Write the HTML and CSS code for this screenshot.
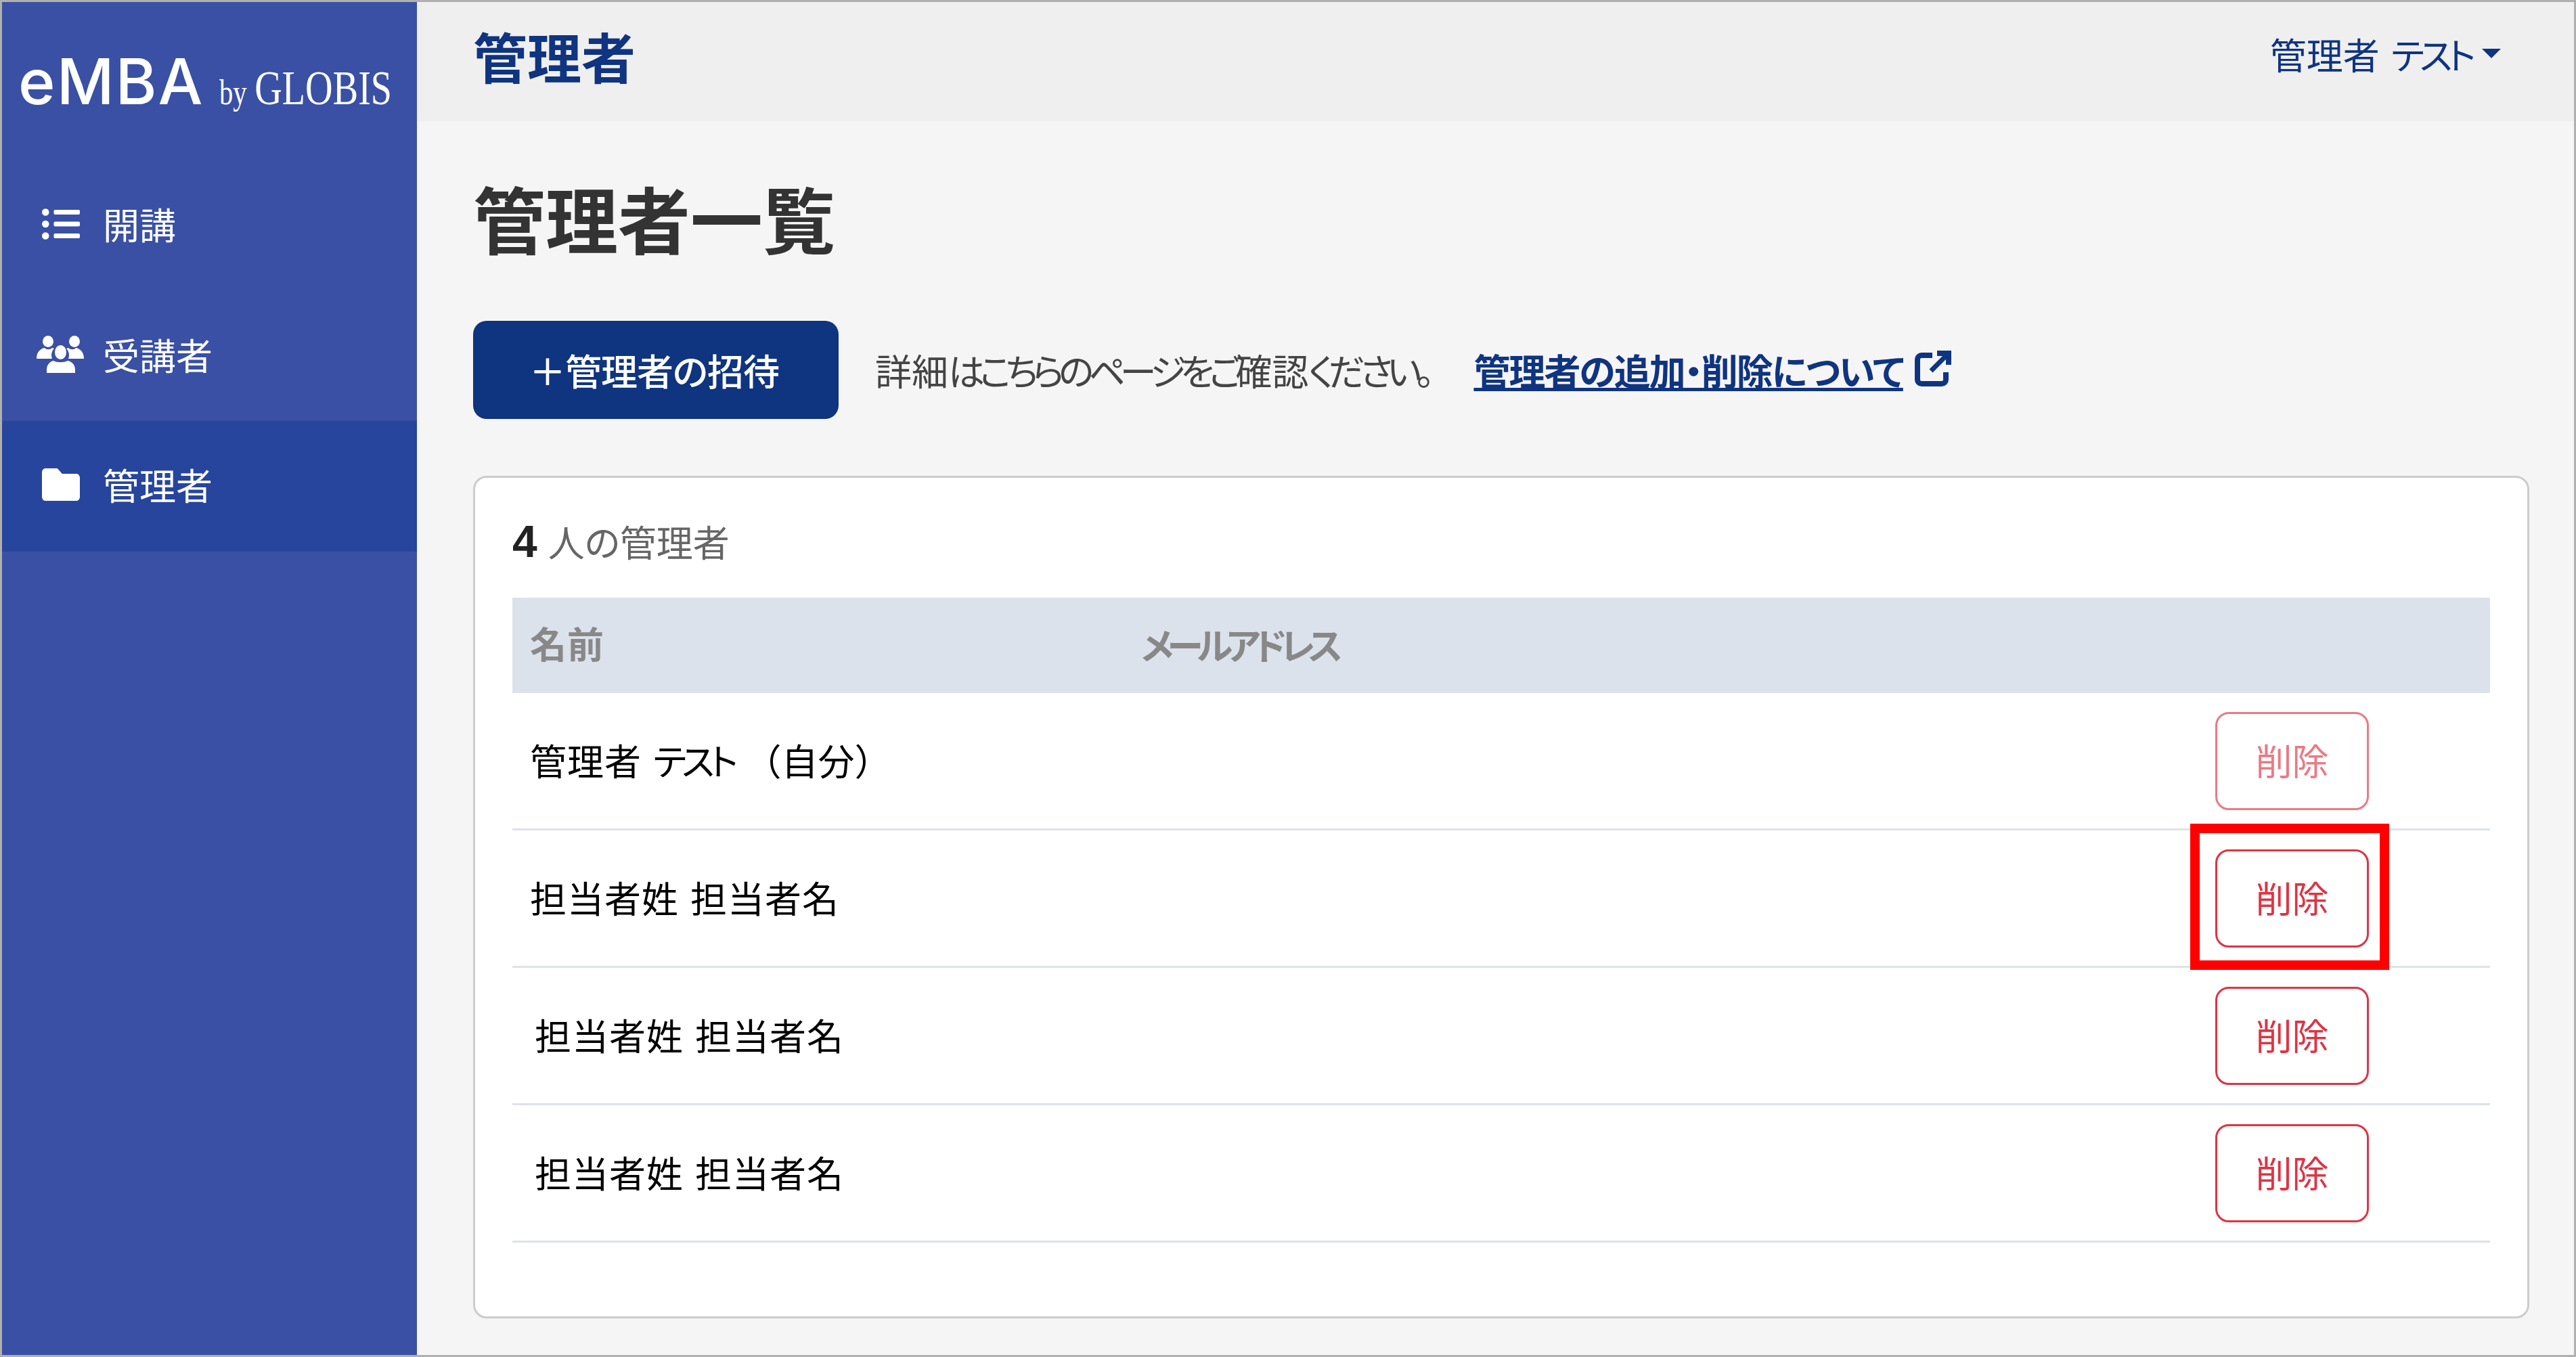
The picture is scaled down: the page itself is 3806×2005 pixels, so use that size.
FILE: index.html
```html
<!DOCTYPE html>
<html lang="ja">
<head>
  <meta charset="UTF-8" />
  <title>管理者一覧</title>
  <link rel="stylesheet" href="styles.css">
</head>
<body>
  <div class="frame">
    <!-- Sidebar -->
    <aside class="sidebar">
      <div class="logo">
        <span class="logo-main">eMBA</span>
        <span class="logo-sub"><span class="logo-by">by</span>GLOBIS</span>
      </div>
      <nav>
        <a class="nav-item">
          <span class="nav-icon">
            <svg class="icon-list" viewBox="0 0 512 416" fill="#fff"><path d="M48 0a48 48 0 1 0 48 48A48 48 0 0 0 48 0zm0 160a48 48 0 1 0 48 48 48 48 0 0 0-48-48zm0 160a48 48 0 1 0 48 48 48 48 0 0 0-48-48zm448 16H176a16 16 0 0 0-16 16v32a16 16 0 0 0 16 16h320a16 16 0 0 0 16-16v-32a16 16 0 0 0-16-16zm0-320H176a16 16 0 0 0-16 16v32a16 16 0 0 0 16 16h320a16 16 0 0 0 16-16V32a16 16 0 0 0-16-16zm0 160H176a16 16 0 0 0-16 16v32a16 16 0 0 0 16 16h320a16 16 0 0 0 16-16v-32a16 16 0 0 0-16-16z"/></svg>
          </span>
          開講
        </a>
        <a class="nav-item">
          <span class="nav-icon">
            <svg class="icon-users" viewBox="0 0 70 55" fill="#fff">
              <ellipse cx="17" cy="8.500" rx="8" ry="8.500"/>
              <ellipse cx="56" cy="8.500" rx="8" ry="8.500"/>
              <ellipse cx="35.500" cy="24.500" rx="8.500" ry="10.500"/>
              <path d="M0 34c0-9 5-15 12-16 2 3 8 3 11 0 1 0 2 1 3 1-4 4-5 10-3 15z"/>
              <path d="M70 34c0-9-5-15-12-16-2 3-8 3-11 0-1 0-2 1-3 1 4 4 5 10 3 15z"/>
              <path d="M15 55V50c0-7 5-12 10-13 5 3 16 3 21 0 6 1 11 6 11 13v5z"/>
            </svg>
          </span>
          受講者
        </a>
        <a class="nav-item active">
          <span class="nav-icon">
            <svg class="icon-folder" viewBox="0 64 512 384" preserveAspectRatio="none" fill="#fff"><path d="M464 128H272l-64-64H48C21.490 64 0 85.490 0 112v288c0 26.510 21.490 48 48 48h416c26.510 0 48-21.490 48-48V176c0-26.510-21.490-48-48-48z"/></svg>
          </span>
          管理者
        </a>
      </nav>
    </aside>

    <div class="content">
      <header class="topbar">
        <div class="topbar-title">管理者</div>
        <div class="user-menu"><span>管理者 <span class="kana">テスト</span></span><span class="caret"></span></div>
      </header>

      <main class="main">
        <h1>管理者一覧</h1>

        <div class="actions">
          <button class="btn-invite">＋管理者の招待</button>
          <span class="help-text">詳細<span class="tight">はこちらのページをご</span>確認<span class="tight">ください。</span></span>
          <a class="help-link">管理者の追加・削除について</a>
          <svg class="icon-external" viewBox="0 0 54 54" fill="none" stroke="#0f3480" stroke-width="8">
            <path d="M26 8H10a6 6 0 0 0-6 6v30a6 6 0 0 0 6 6h30a6 6 0 0 0 6-6V33"/>
            <path d="M33 5h17v17"/>
            <path d="M49 6L24 31" stroke-width="7"/>
          </svg>
        </div>

        <section class="card">
          <div class="count"><b>4</b> 人の管理者</div>
          <div class="table-head">
            <div class="col-name">名前</div>
            <div class="col-mail">メールアドレス</div>
          </div>
          <div class="row">
            <div class="col-name">管理者 <span class="kana">テスト</span> <span class="paren">（自分）</span></div>
            <button class="btn-delete disabled">削除</button>
          </div>
          <div class="row">
            <div class="col-name">担当者姓 担当者名</div>
            <button class="btn-delete">削除<span class="highlight"></span></button>
          </div>
          <div class="row">
            <div class="col-name indent">担当者姓 担当者名</div>
            <button class="btn-delete">削除</button>
          </div>
          <div class="row">
            <div class="col-name indent">担当者姓 担当者名</div>
            <button class="btn-delete">削除</button>
          </div>
        </section>
      </main>
    </div>
  </div>
</body>
</html>
```

FILE: styles.css
```css
* {
  margin: 0;
  padding: 0;
  box-sizing: border-box;
}

html, body {
  height: 100%;
}

body {
  font-family: 'Noto Sans CJK JP', 'Noto Sans', sans-serif;
  font-size: 54px;
  font-feature-settings: "palt";
  color: #000;
  overflow: hidden;
}

.frame {
  display: flex;
  height: 2005px;
  border: 3px solid #b0b0b0;
}

.kana {
  letter-spacing: -7px;
}

/* Sidebar */
.sidebar {
  width: 613px;
  flex-shrink: 0;
  background: #3a50a4;
  color: #fff;
}

.logo {
  height: 234px;
  padding: 67px 0 0 24px;
  display: flex;
  align-items: baseline;
}

.logo-main {
  font-family: 'Inter', sans-serif;
  font-size: 93px;
  line-height: 100px;
  font-weight: 500;
  letter-spacing: 2px;
  width: 297px;
  flex-shrink: 0;
}

.logo-sub {
  display: inline-block;
  font-family: 'Liberation Serif', serif;
  font-size: 72px;
  white-space: nowrap;
  transform: scaleX(0.78);
  transform-origin: left;
}

.logo-by {
  font-size: 52px;
  margin-right: 15px;
}

.nav-item {
  display: flex;
  align-items: center;
  height: 192.500px;
  padding-bottom: 4px;
  line-height: 1;
}

.nav-item.active {
  background: #27459d;
}

.nav-icon {
  width: 149px;
  flex-shrink: 0;
  padding-left: 51px;
  display: flex;
  align-items: center;
}

.icon-list, .icon-folder {
  width: 56px;
  height: 48px;
  margin-left: 8px;
}

.icon-users {
  width: 70px;
  height: 55px;
}

/* Top bar */
.content {
  flex: 1;
  display: flex;
  flex-direction: column;
  background: #f5f5f5;
}

.topbar {
  height: 176px;
  background: #efefef;
  display: flex;
  justify-content: space-between;
  align-items: center;
  padding: 0 108px 0 83px;
  color: #0f3480;
}

.topbar-title {
  font-size: 80px;
  font-weight: 700;
  margin-bottom: 20px;
}

.user-menu {
  display: flex;
  align-items: center;
  font-size: 54px;
  word-spacing: 5px;
  margin-bottom: 24px;
}

.caret {
  width: 0;
  height: 0;
  margin-left: 16px;
  border-left: 14px solid transparent;
  border-right: 14px solid transparent;
  border-top: 14px solid #0f3480;
}

/* Main */
.main {
  padding: 0 66px 0 83px;
}

h1 {
  font-size: 107px;
  font-weight: 700;
  line-height: 150px;
  margin-top: 67px;
  color: #333;
}

.actions {
  display: flex;
  align-items: center;
  margin-top: 78px;
  color: #444;
}

.btn-invite {
  width: 540px;
  height: 145px;
  padding-right: 5px;
  background: #0f3480;
  color: #fff;
  border: none;
  border-radius: 20px;
  font: inherit;
  font-weight: 500;
  letter-spacing: -1px;
  margin-right: 54px;
}

.help-text {
  margin-right: 66px;
}

.tight {
  letter-spacing: -8px;
}

.help-link {
  color: #0f3480;
  font-weight: 700;
  letter-spacing: -2px;
  text-decoration: underline;
}

.icon-external {
  width: 54px;
  height: 54px;
  margin-left: 17px;
  margin-top: -6px;
}

/* Card */
.card {
  margin-top: 84px;
  height: 1245px;
  background: #fff;
  border: 3px solid #ccc;
  border-radius: 20px;
  padding: 0 55px;
}

.count {
  height: 177px;
  padding-top: 56px;
  line-height: 76px;
  color: #666;
}

.count b {
  font-family: 'Liberation Sans', sans-serif;
  font-size: 66px;
  font-weight: 700;
  color: #222;
  margin-right: 4px;
}

.table-head {
  display: flex;
  align-items: center;
  height: 141px;
  padding-bottom: 4px;
  background: #dce2ec;
  color: #888;
  font-weight: 700;
}

.col-name {
  width: 929px;
  padding-left: 26px;
  letter-spacing: 1px;
  word-spacing: 4px;
  margin-bottom: 4px;
}

.col-mail {
  letter-spacing: -9px;
}

.paren {
  font-feature-settings: normal;
  letter-spacing: 0;
}

.row {
  display: flex;
  align-items: center;
  justify-content: space-between;
  height: 203px;
  border-bottom: 3px solid #dee2e8;
  padding-right: 179px;
}

.indent {
  padding-left: 33px;
}

.btn-delete {
  position: relative;
  width: 227px;
  height: 145px;
  padding-bottom: 4px;
  background: #fff;
  border: 3px solid #dc3545;
  border-radius: 20px;
  color: #dc3545;
  font: inherit;
}

.btn-delete.disabled {
  opacity: 0.65;
}

/* Red annotation box over the second delete button */
.highlight {
  position: absolute;
  top: -41px;
  bottom: -36px;
  left: -40px;
  right: -33px;
  border: 14px solid #ff0000;
}
```
